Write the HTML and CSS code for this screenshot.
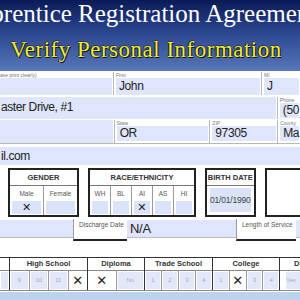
FILE: index.html
```html
<!DOCTYPE html>
<html lang="en">
<head>
  <meta charset="UTF-8" />
  <title>Apprentice Registration Agreement</title>
  <link rel="stylesheet" href="styles.css">
</head>
<body>
<div class="sheet">

  <header class="banner">
    <div class="title">Apprentice Registration Agreement</div>
    <div class="subtitle">Verify Personal Information</div>
  </header>

  <div class="row r1">
    <div class="cell w-a"><span class="lbl">ase print clearly)</span><span class="val"></span></div>
    <div class="cell w-first"><span class="lbl">First</span><span class="val">John</span></div>
    <div class="cell grow"><span class="lbl">MI</span><span class="val">J</span></div>
  </div>

  <div class="row r2">
    <div class="cell w-addr"><span class="val full">aster Drive, #1</span></div>
    <div class="cell grow"><span class="lbl">Phone</span><span class="val">(50</span></div>
  </div>

  <div class="row r3">
    <div class="cell w-city"><span class="val full"></span></div>
    <div class="cell w-state"><span class="lbl">State</span><span class="val">OR</span></div>
    <div class="cell w-zip"><span class="lbl">ZIP</span><span class="val">97305</span></div>
    <div class="cell grow"><span class="lbl">County</span><span class="val">Ma</span></div>
  </div>

  <div class="row r4">
    <div class="cell grow"><span class="val full">il.com</span></div>
  </div>

  <div class="boxes">
    <div class="box gender">
      <div class="box-head">GENDER</div>
      <div class="opts">
        <span>Male</span><span>Female</span>
      </div>
      <div class="ticks">
        <span>&#x2715;</span><span></span>
      </div>
    </div>

    <div class="box race">
      <div class="box-head">RACE/ETHNICITY</div>
      <div class="opts">
        <span>WH</span><span>BL</span><span>AI</span><span>AS</span><span>HI</span>
      </div>
      <div class="ticks">
        <span></span><span></span><span>&#x2715;</span><span></span><span></span>
      </div>
    </div>

    <div class="box birth">
      <div class="box-head">BIRTH DATE</div>
      <div class="date">01/01/1990</div>
    </div>

    <div class="box next"></div>
  </div>

  <div class="row service">
    <div class="svc-field w-left"></div>
    <div class="svc-lbl w-dis">Discharge Date</div>
    <div class="svc-field w-na">N/A</div>
    <div class="svc-lbl w-len">Length of Service</div>
    <div class="svc-field grow"></div>
  </div>

  <div class="edu">
    <div class="group g0">
      <div class="g-head"></div>
      <div class="g-cells"><span>.</span></div>
    </div>
    <div class="group g-hs">
      <div class="g-head">High School</div>
      <div class="g-cells"><span>9</span><span>10</span><span>11</span><span class="x">&#x2715;</span></div>
    </div>
    <div class="group g-dip">
      <div class="g-head">Diploma</div>
      <div class="g-cells"><span class="x">&#x2715;</span><span>No</span></div>
    </div>
    <div class="group g-ts">
      <div class="g-head">Trade School</div>
      <div class="g-cells"><span>1</span><span>2</span><span>3</span><span>4</span></div>
    </div>
    <div class="group g-col">
      <div class="g-head">College</div>
      <div class="g-cells"><span>1</span><span class="x">&#x2715;</span><span>3</span><span>4</span></div>
    </div>
    <div class="group g-last">
      <div class="g-head">Dip</div>
      <div class="g-cells"><span>Yes</span></div>
    </div>
  </div>

  <div class="band"></div>

</div>
</body>
</html>
```

FILE: styles.css
```css
body {
  margin: 0;
  background: #fff;
  font-family: "Liberation Sans", Arial, sans-serif;
}

.sheet {
  width: 300px;
  height: 300px;
  overflow: hidden;
  display: flex;
  flex-direction: column;
}

/* banner */
.banner {
  height: 71px;
  flex: none;
  background: linear-gradient(#0b1a56, #2b4690 45%, #5677b8);
  font-family: "Liberation Serif", "Times New Roman", serif;
  display: flex;
  flex-direction: column;
  align-items: center;
  overflow: hidden;
  margin-bottom: 1px;
}

.title {
  color: #fff;
  font-size: 25px;
  line-height: 26px;
  margin-top: 1px;
  margin-right: 23px;
  white-space: nowrap;
}

.subtitle {
  color: #ecec3c;
  font-size: 23px;
  line-height: 24px;
  margin-top: 11px;
  margin-right: 8px;
  letter-spacing: 0.5px;
  white-space: nowrap;
  text-shadow: 1px 1px 0 #111, -1px 0 0 #223, 0 -1px 0 #334;
}

/* text rows */
.row {
  display: flex;
  flex: none;
}

.cell {
  display: flex;
  flex-direction: column;
  padding-right: 1px;
}

.cell + .cell {
  border-left: 1px solid #b8b8b8;
  padding-left: 2px;
}

.grow {
  flex: 1;
}

.lbl {
  font-size: 5px;
  line-height: 6px;
  height: 6px;
  color: #777;
  white-space: nowrap;
}

.val {
  background: #dfe5fb;
  height: 17px;
  font-size: 12px;
  letter-spacing: -0.4px;
  line-height: 17px;
  color: #222;
  padding-left: 3px;
  white-space: nowrap;
}

.val.full {
  flex: 1;
  height: auto;
  padding-left: 1px;
}

.w-a { width: 112px; }
.w-first { width: 144px; }
.w-addr { width: 278px; }
.w-city { width: 113px; }
.w-state { width: 92px; }
.w-zip { width: 64px; }

.r1 { height: 23px; margin-bottom: 2px; }
.r2 { height: 22px; }
.r2 .val { height: 15px; line-height: 15px; }
.r2 .val.full { line-height: 20px; height: auto; }
.r3 {
  height: 23px;
  border-bottom: 1px solid #b8b8b8;
  padding-top: 1px;
}
.r3 .val { height: 15px; line-height: 15px; }
.r4 { height: 23px; padding: 3px 0 2px; box-sizing: border-box; }
.r4 .cell { padding: 0; }
.r4 .val.full { line-height: 18px; }

/* boxes */
.boxes {
  display: flex;
  height: 49px;
  flex: none;
  margin-top: 1px;
  gap: 9px;
  padding-left: 8px;
}

.box {
  border: 2px solid #222;
  box-sizing: border-box;
  display: flex;
  flex-direction: column;
  background: #fff;
}

.box-head {
  height: 15px;
  line-height: 15px;
  text-align: center;
  font-size: 7.5px;
  font-weight: bold;
  color: #333;
  border-bottom: 1px solid #777;
  white-space: nowrap;
}

.opts, .ticks {
  display: flex;
}

.opts span, .ticks span {
  flex: 1;
  text-align: center;
}

.opts span + span, .ticks span + span {
  border-left: 1px solid #999;
}

.opts span {
  height: 15px;
  line-height: 15px;
  font-size: 6.5px;
  color: #555;
}

.ticks span {
  height: 13px;
  line-height: 13px;
  font-family: "DejaVu Sans", sans-serif;
  font-size: 11px;
  color: #222;
  background: #dbe3fa;
  background-clip: content-box;
  padding: 0 2px 1px;
}

.gender { width: 80px; }
.race { width: 122px; }
.birth { width: 53px; }
.next { width: 40px; border-right: none; }

.date {
  margin: 2px 3px 3px;
  flex: 1;
  background: #dbe3fa;
  text-align: center;
  font-size: 8.5px;
  letter-spacing: -0.2px;
  line-height: 24px;
  color: #444;
  white-space: nowrap;
}

/* service row */
.service {
  height: 24px;
  padding-top: 2px;
  box-sizing: border-box;
}

.svc-field {
  background: #dfe5fb;
  height: 18px;
  margin-top: 1px;
  font-size: 13px;
  letter-spacing: -0.3px;
  line-height: 18px;
  color: #222;
  padding-left: 3px;
  box-sizing: border-box;
  border-bottom: 1px solid #bbb;
}

.svc-lbl {
  border-left: 1px solid #999;
  border-bottom: 2px solid #222;
  font-size: 6.5px;
  color: #555;
  padding: 2px 0 0 5px;
  box-sizing: border-box;
  height: 22px;
  white-space: nowrap;
}

.w-left { width: 73px; }
.w-dis { width: 54px; }
.w-na { width: 109px; }
.w-len { width: 60px; }

/* education table */
.edu {
  display: flex;
  flex: none;
  margin-top: 16px;
  height: 32px;
  border-top: 1px solid #333;
  border-bottom: 1px solid #888;
}

.group {
  display: flex;
  flex-direction: column;
  flex: none;
  border-left: 1px solid #333;
}

.g0 { border-left: none; width: 9px; }
.g-hs { width: 77px; }
.g-dip { width: 56px; }
.g-ts { width: 67px; }
.g-col { width: 66px; }
.g-last { width: 30px; }

.g-head {
  height: 12px;
  line-height: 12px;
  text-align: center;
  font-size: 7.5px;
  font-weight: bold;
  color: #333;
  border-bottom: 1px solid #888;
  white-space: nowrap;
}

.g-last .g-head { text-align: left; padding-left: 14px; }

.g-cells {
  display: flex;
  flex: 1;
}

.g-cells span {
  flex: 1;
  text-align: center;
  font-size: 6px;
  line-height: 17px;
  color: #aab;
  background: #e2e8fa;
  background-clip: content-box;
  padding: 1px;
}

.g-cells span + span {
  border-left: 1px solid #999;
}

.g-cells span.x {
  font-family: "DejaVu Sans", sans-serif;
  font-size: 13px;
  color: #222;
  background: none;
}

.g-last .g-cells span { text-align: left; padding-left: 6px; }

.band {
  flex: 1;
  background: #bdd2ec;
  margin-top: 1px;
}
```
